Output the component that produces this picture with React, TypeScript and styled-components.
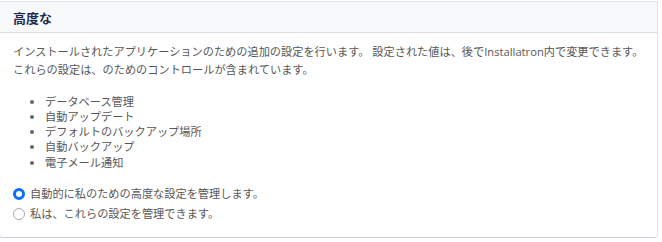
import React from "react";
import styled, { createGlobalStyle } from "styled-components";

const Global = createGlobalStyle`
  html, body { margin: 0; padding: 0; background: #ffffff; }
  body { font-family: "Open Sans", "Noto Sans CJK JP", sans-serif; }
`;

const Page = styled.div`
  padding: 1px 4px 0 0;
`;

const Card = styled.section`
  margin-left: -1px;
  width: 659px;
  height: 237px;
  box-sizing: border-box;
  border: 1px solid #dfe2e7;
  border-bottom-color: #c9ced8;
  border-radius: 0 0 4px 4px;
  background: #ffffff;
  overflow: hidden;
`;

const Header = styled.header`
  height: 30px;
  display: flex;
  align-items: center;
  padding: 0 13px;
  background: #f8f9fb;
  border-bottom: 1px solid #dcdfe4;
`;

const Title = styled.h2`
  margin: 0;
  font-size: 13px;
  font-weight: 700;
  color: #1f2a4d;
`;

const Body = styled.div`
  padding: 10px 13px 0;
  font-size: 11.2px;
  color: #575757;
`;

const Paragraph = styled.p`
  margin: 0;
  line-height: 18px;
`;

const List = styled.ul`
  margin: 14.5px 0 0;
  padding: 0 0 0 32px;
  li {
    height: 15.3px;
    line-height: 15.3px;
  }
  li::marker { color: #666; }
`;

const Options = styled.div`
  margin-top: 16.5px;
  display: flex;
  flex-direction: column;
  gap: 4px;
`;

const OptionRow = styled.label`
  display: flex;
  align-items: center;
  gap: 5px;
  height: 16px;
  line-height: 16px;
  cursor: pointer;
`;

const RadioDot = styled.span<{ $checked: boolean }>`
  width: 12px;
  height: 12px;
  box-sizing: border-box;
  border-radius: 50%;
  flex: none;
  border: ${(p) => (p.$checked ? "3.5px solid #0d6efd" : "1px solid #a9a9a9")};
  background: #ffffff;
`;

const items = [
  "データベース管理",
  "自動アップデート",
  "デフォルトのバックアップ場所",
  "自動バックアップ",
  "電子メール通知",
];

export default function App() {
  const [choice, setChoice] = React.useState(0);
  const options = [
    "自動的に私のための高度な設定を管理します。",
    "私は、これらの設定を管理できます。",
  ];
  return (
    <>
      <Global />
      <Page>
        <Card>
          <Header>
            <Title>高度な</Title>
          </Header>
          <Body>
            <Paragraph>
              インストールされたアプリケーションのための追加の設定を行います。 設定された値は、後でInstallatron内で変更できます。
              <br />
              これらの設定は、のためのコントロールが含まれています。
            </Paragraph>
            <List>
              {items.map((t) => (
                <li key={t}>{t}</li>
              ))}
            </List>
            <Options>
              {options.map((t, i) => (
                <OptionRow key={t} onClick={() => setChoice(i)}>
                  <RadioDot $checked={choice === i} />
                  {t}
                </OptionRow>
              ))}
            </Options>
          </Body>
        </Card>
      </Page>
    </>
  );
}
